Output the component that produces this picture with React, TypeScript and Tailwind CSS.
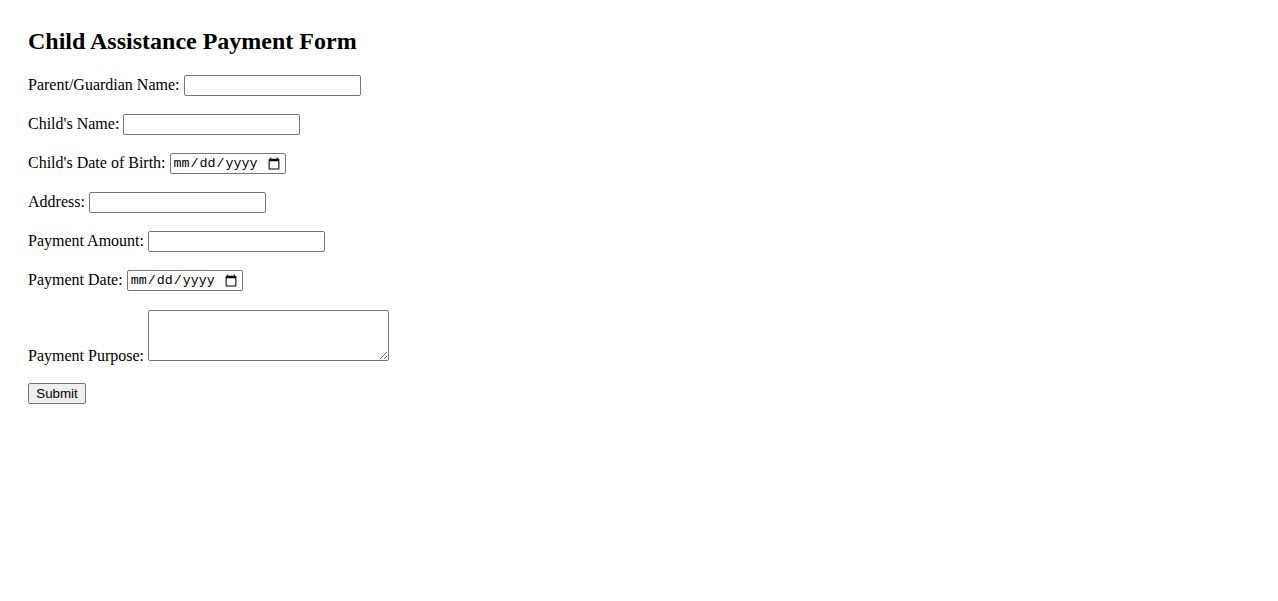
import React from "react";

const inputBase =
  "border border-[#767676] rounded-[2px] bg-white px-[2px] py-[1px] h-[21px] text-[13.33px] text-black";

function Field(props: { label: string; children: React.ReactNode }) {
  return (
    <div className="flex h-[21px] items-center gap-[4px]">
      <label className="mb-[2px] whitespace-nowrap leading-[18px]">{props.label}</label>
      {props.children}
    </div>
  );
}

export default function App() {
  return (
    <div className="min-h-screen bg-white pl-[28px] pt-[28px] font-['Liberation_Serif',serif] text-[16px] text-black">
      <h2 className="text-[24px] font-bold leading-[27px]">
        Child Assistance Payment Form
      </h2>
      <form className="mt-[20px] flex flex-col items-start gap-[18px]">
        <Field label="Parent/Guardian Name:">
          <input type="text" className={inputBase + " w-[177px] font-['Liberation_Sans',sans-serif]"} />
        </Field>
        <Field label="Child's Name:">
          <input type="text" className={inputBase + " w-[177px] font-['Liberation_Sans',sans-serif]"} />
        </Field>
        <Field label="Child's Date of Birth:">
          <input type="date" className={inputBase + " w-[116px] font-['Liberation_Mono',monospace]"} />
        </Field>
        <Field label="Address:">
          <input type="text" className={inputBase + " w-[177px] font-['Liberation_Sans',sans-serif]"} />
        </Field>
        <Field label="Payment Amount:">
          <input type="text" className={inputBase + " w-[177px] font-['Liberation_Sans',sans-serif]"} />
        </Field>
        <Field label="Payment Date:">
          <input type="date" className={inputBase + " w-[116px] font-['Liberation_Mono',monospace]"} />
        </Field>
        <div className="mt-px flex items-end gap-[4px]">
          <label className="whitespace-nowrap leading-[10px]">Payment Purpose:</label>
          <textarea className="h-[51px] w-[241px] rounded-[2px] border border-[#767676] bg-white px-[2px] py-[2px] font-['Liberation_Mono',monospace] text-[13.33px]" />
        </div>
        <button
          type="button"
          className="mt-[4px] h-[21px] w-[58px] rounded-[2px] border border-[#767676] bg-[#efefef] font-['Liberation_Sans',sans-serif] text-[13.33px] leading-[15px] text-black"
        >
          Submit
        </button>
      </form>
    </div>
  );
}
